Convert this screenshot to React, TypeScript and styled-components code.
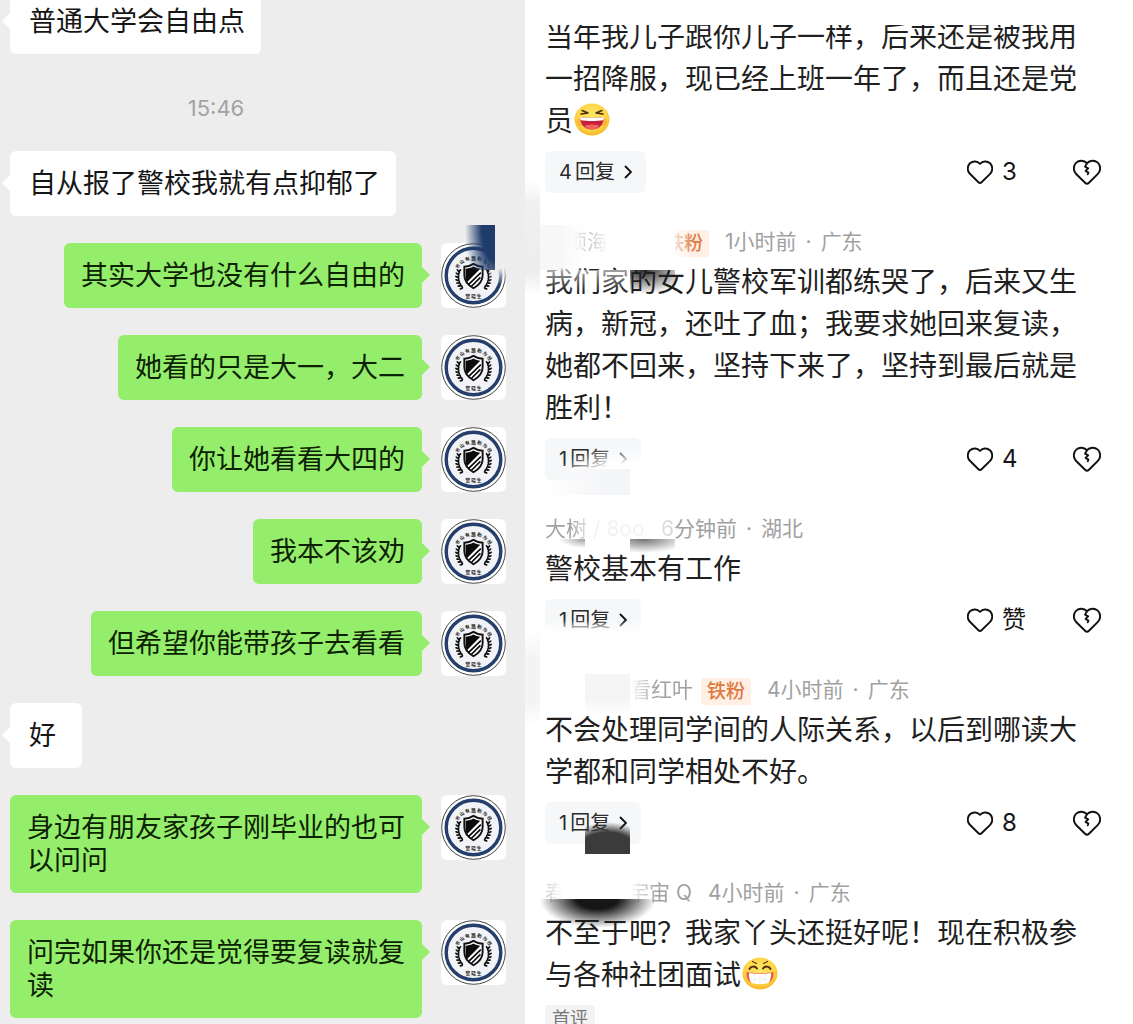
import React from "react";
import styled, { createGlobalStyle } from "styled-components";

const GlobalStyle = createGlobalStyle`
  * { box-sizing: border-box; }
  body { margin: 0; background: #fff; }
  button { font: inherit; color: inherit; border: 0; margin: 0; padding: 0; background: none; cursor: pointer; }
`;

const Page = styled.main`
  display: grid;
  grid-template-columns: 525fr 15px 593fr;
  height: 100vh;
  overflow: hidden;
  font-family: Inter, "Noto Sans CJK SC", sans-serif;
`;

/* ---------- chat ---------- */

const Chat = styled.section`
  display: flex;
  flex-direction: column;
  gap: 27px;
  margin-top: -11px;
  padding: 0 19px 0 10px;
  background: #ededed;
  font-family: "Noto Sans CJK SC", sans-serif;
`;

const Time = styled.time`
  padding: 11px 84px 0 0;
  text-align: center;
  font: 22px/32px Inter, sans-serif;
  color: #a3a3a3;
`;

const Message = styled.div<{ $mine?: boolean }>`
  display: flex;
  align-items: flex-start;
  justify-content: ${(p) => (p.$mine ? "flex-end" : "flex-start")};
  gap: 19px;
`;

const Bubble = styled.p<{ $mine?: boolean }>`
  position: relative;
  margin: 0;
  padding: ${(p) => (p.$mine ? "14px 17px 18px" : "14px 16px 18px 19px")};
  min-width: 72px;
  max-width: 412px;
  border-radius: 6px;
  font-size: 27px;
  line-height: 33px;
  color: ${(p) => (p.$mine ? "#0c2203" : "#161616")};
  background: ${(p) => (p.$mine ? "#95ee6b" : "#fff")};

  &::after {
    content: "";
    position: absolute;
    top: 23px;
    ${(p) => (p.$mine ? "right" : "left")}: -8px;
    width: 9px;
    height: 18px;
    background: inherit;
    clip-path: ${(p) =>
      p.$mine ? "polygon(0 0, 100% 50%, 0 100%)" : "polygon(100% 0, 0 50%, 100% 100%)"};
  }
`;

const AvatarFrame = styled.div`
  position: relative;
  flex: none;
  width: 65px;
  height: 65px;
  border-radius: 6px;
  background: #fff;

  svg { display: block; }
`;

const leaves = [0, 1, 2, 3, 4, 5, 6].map((i) => {
  const angle = ((160 + i * 11) * Math.PI) / 180;
  return { x: 32.5 + 15.5 * Math.cos(angle), y: 34 - 15.5 * Math.sin(angle), turn: -i * 11 };
});

function Avatar({ children }: { children?: React.ReactNode }) {
  return (
    <AvatarFrame>
      <svg width="65" height="65" viewBox="0 0 65 65" role="img" aria-label="警晓生">
        <defs>
          <path id="arc" d="M15 34 A17.500 17.500 0 0 1 50 34" />
        </defs>
        <circle cx="32.5" cy="32.5" r="31.8" fill="#fff" stroke="#444" strokeWidth="1" />
        <circle cx="32.5" cy="32.5" r="27.3" fill="#f1f3f6" stroke="#243f6c" strokeWidth="3.4" />
        <g fontSize="4.600" fontWeight="700" fill="#222" fontFamily="Noto Sans CJK SC, sans-serif">
          <text>
            <textPath href="#arc" startOffset="50%" textAnchor="middle">
              书 山 有 路 勤 为 径
            </textPath>
          </text>
          <text x="32.5" y="54.500" textAnchor="middle">警 晓 生</text>
        </g>
        {[false, true].map((flip) => (
          <g key={String(flip)} transform={flip ? "translate(65 0) scale(-1 1)" : undefined} fill="#111">
            {leaves.map((l) => (
              <g key={l.turn} transform={`translate(${l.x} ${l.y}) rotate(${l.turn})`}>
                <ellipse cx="-1.500" rx="1.900" ry="0.9" transform="rotate(50)" />
                <ellipse cx="1.500" rx="1.900" ry="0.9" transform="rotate(-50)" />
              </g>
            ))}
          </g>
        ))}
        <g transform="translate(4.200 4.800) scale(0.87)">
          <path d="M32.5 18.500c4 2.600 7.500 3.200 10.500 3.300v9.700c0 7-4.500 11.500-10.500 15-6-3.500-10.500-8-10.500-15v-9.700c3-.1 6.500-.7 10.500-3.300z" fill="#fff" stroke="#111" strokeWidth="2.200" />
          <path d="M32.500 21.500c2.800 1.600 5.300 2.200 7.800 2.500L25 39.500c-1.200-2.300-1.500-4.800-1.500-8V24c3-.3 6-.9 9-2.500z" fill="#0b0b0b" />
          <path d="M27 42 41 28.500M30 44.500l10.500-10.500" stroke="#0b0b0b" strokeWidth="1.900" fill="none" />
        </g>
      </svg>
      {children}
    </AvatarFrame>
  );
}

/* ---------- comments ---------- */

const Gutter = styled.div`
  position: relative;
`;

const Comments = styled.section`
  margin-top: 25px;
  overflow: hidden;
`;

const CommentList = styled.div`
  display: flex;
  flex-direction: column;
  gap: 32px;
  margin-top: -9px;
  padding: 0 30px 0 5px;
`;

const Comment = styled.article`
  position: relative;
  display: flex;
  flex-direction: column;
`;

const Meta = styled.header`
  display: flex;
  align-items: center;
  height: 36px;
  font-size: 21px;
  line-height: 32px;
  padding-bottom: 2px;
  color: #a1a1a1;
`;

const Name = styled.span<{ $width: number; $align?: string; $fade?: string }>`
  display: flex;
  flex: none;
  justify-content: ${(p) => p.$align ?? "flex-start"};
  width: ${(p) => p.$width}px;
  white-space: pre;
  mask-image: ${(p) => p.$fade ?? "none"};
`;

const FanBadge = styled.span`
  margin: 2px 0 0 8px;
  padding: 0 6px;
  border-radius: 3px;
  font-size: 19px;
  line-height: 27px;
  font-weight: 500;
  color: #e07a40;
  background: #ffefe5;
`;

const Posted = styled.span<{ $gap?: boolean }>`
  margin-left: ${(p) => (p.$gap ? 16 : 0)}px;
`;

const Dot = styled.span`
  margin: 0 9px;
`;

const Text = styled.p`
  margin: 0;
  font-size: 28px;
  line-height: 42px;
  color: #1f1f1f;

  svg { vertical-align: -5px; margin-left: 1px; }
`;

const Actions = styled.footer`
  display: flex;
  align-items: center;
  height: 42px;
  margin-top: 9px;
`;

const Reply = styled.button`
  display: flex;
  align-items: center;
  gap: 3px;
  height: 42px;
  padding: 0 14px;
  border-radius: 6px;
  font-size: 20px;
  line-height: 24px;
  color: #2b2b2b;
  background: #f5f7f9;

  svg { margin-left: 6px; }
`;

const Like = styled.button`
  display: flex;
  align-items: center;
  gap: 9px;
  width: 106px;
  margin-left: auto;
  font-size: 24px;
  line-height: 32px;
  color: #161616;
`;

const Dislike = styled.button`
  display: flex;
  margin-right: 2px;
`;

const FirstTag = styled.span`
  align-self: flex-start;
  margin-top: 9px;
  padding: 0 7px;
  border-radius: 3px;
  font-size: 18px;
  line-height: 27px;
  color: #777;
  background: #f3f3f3;
`;

/* Soft patch lying over a name or avatar to keep it private. */
const Smudge = styled.i<{ $x: number; $y: number; $w: number; $h: number; $bg: string }>`
  position: absolute;
  pointer-events: none;
  left: ${(p) => p.$x}px;
  top: ${(p) => p.$y}px;
  width: ${(p) => p.$w}px;
  height: ${(p) => p.$h}px;
  background: ${(p) => p.$bg};
`;

const HEART =
  "M11.200 22 2.900 13.800C-.2 10.700.3 5.700 3 3.300 6 .6 10.300 1 13 3.800 15.700 1 20 .6 23 3.300c2.700 2.400 3.200 7.400.1 10.500L14.800 22c-1 1-2.600 1-3.600 0z";

const Heart = () => (
  <svg width="26" height="24" viewBox="0 0 26 24" fill="none" stroke="#111" strokeWidth="1.900" strokeLinejoin="round" aria-hidden="true">
    <path d={HEART} />
  </svg>
);

const BrokenHeart = () => (
  <svg width="28" height="26" viewBox="0 0 26 24" fill="none" stroke="#111" strokeWidth="1.800" strokeLinejoin="round" strokeLinecap="round" aria-hidden="true">
    <path d={HEART} />
    <path d="M13 3.800 11.200 7l2.900 1.600-2.400 2.400 2.600 1.500-.6 1.600" />
  </svg>
);

const Chevron = () => (
  <svg width="8" height="14" viewBox="0 0 8 14" fill="none" stroke="#111" strokeWidth="1.900" aria-hidden="true">
    <path d="M1 1l6 6-6 6" />
  </svg>
);

const Face = () => (
  <>
    <radialGradient id="face" cx="50%" cy="40%" r="60%">
      <stop offset="0" stopColor="#ffe768" />
      <stop offset="0.700" stopColor="#fed545" />
      <stop offset="1" stopColor="#f7b52c" />
    </radialGradient>
    <ellipse cx="18" cy="16.500" rx="17.500" ry="16" fill="url(#face)" />
  </>
);

const Laugh = () => (
  <svg width="36" height="33" viewBox="0 0 36 33" role="img" aria-label="大笑">
    <Face />
    <circle cx="7" cy="19" r="4" fill="#f99a3c" opacity="0.5" />
    <circle cx="29" cy="19" r="4" fill="#f99a3c" opacity="0.5" />
    <path d="M8 7.500l6 2.500-7 1M28 7.500l-6 2.500 7 1" fill="none" stroke="#4a2c0c" strokeWidth="1.500" strokeLinejoin="round" strokeLinecap="round" />
    <path d="M6 14c7 1.200 17 1.200 24 0-.3 8-5 12.500-12 12.500S6.300 22 6 14z" fill="#c3203a" />
    <path d="M6 14c7 1.200 17 1.200 24 0l-.5 3.200c-7 1-16 1-23 0z" fill="#fff" />
    <path d="M10.500 23c4-2 11-2 15 0-1.800 2.400-4.500 3.500-7.500 3.500s-5.700-1.100-7.500-3.500z" fill="#f0645f" />
  </svg>
);

const Grin = () => (
  <svg width="36" height="33" viewBox="0 0 36 33" role="img" aria-label="呲牙">
    <Face />
    <path d="M10.500 4.500l4 2M25.500 4.500l-4 2" stroke="#5a3a10" strokeWidth="1.300" strokeLinecap="round" />
    <path d="M7.500 12c1.300-3 5.500-3.300 7.500-.5M21 11.500c2-2.800 6.200-2.500 7.500.5" fill="none" stroke="#4a2c0c" strokeWidth="1.900" strokeLinecap="round" />
    <path d="M4.500 15c8 1.500 19 1.500 27 0 .3 6-1.500 8.500-4 10h-19c-2.500-1.500-4.300-4-4-10z" fill="#ec5a3f" />
    <path d="M7 16c6.500 1 15.500 1 22 0 .2 6-1.500 10-4.500 10.500-4 .7-9 .7-13 0C8.500 26 6.800 22 7 16z" fill="#fff" />
    <path d="M8 22h20M13 17v9.500M18 17.500v9.500M23 17v9.500" stroke="#e3e6ea" strokeWidth="0.600" />
  </svg>
);

function ActionRow({ replies, likes }: { replies: number; likes: string }) {
  return (
    <Actions>
      <Reply type="button">
        <span>{replies}</span>
        <span>回复</span>
        <Chevron />
      </Reply>
      <Like type="button" aria-label={`赞 ${likes}`}>
        <Heart />
        <span>{likes}</span>
      </Like>
      <Dislike type="button" aria-label="踩">
        <BrokenHeart />
      </Dislike>
    </Actions>
  );
}

const PostedAt = ({ time, place, gap = true }: { time: string; place: string; gap?: boolean }) => (
  <Posted $gap={gap}>
    {time}
    <Dot>·</Dot>
    {place}
  </Posted>
);

const replies = [
  "她看的只是大一，大二",
  "你让她看看大四的",
  "我本不该劝",
  "但希望你能带孩子去看看",
];

const closing = ["身边有朋友家孩子刚毕业的也可以问问", "问完如果你还是觉得要复读就复读"];

const Mine = ({ text, cover }: { text: string; cover?: React.ReactNode }) => (
  <Message $mine>
    <Bubble $mine>{text}</Bubble>
    <Avatar>{cover}</Avatar>
  </Message>
);

const Theirs = ({ text }: { text: string }) => (
  <Message>
    <Bubble>{text}</Bubble>
  </Message>
);

export default function App() {
  return (
    <Page>
      <GlobalStyle />
      <Chat>
        <Theirs text="普通大学会自由点" />
        <Time>15:46</Time>
        <Theirs text="自从报了警校我就有点抑郁了" />
        <Mine
          text="其实大学也没有什么自由的"
          cover={
            <>
              <Smudge $x={48} $y={0} $w={17} $h={42} $bg="radial-gradient(ellipse 24px 42px at 60% 0, #ededed 60%, rgba(237,237,237,0) 100%)" />
              <Smudge $x={24} $y={-18} $w={30} $h={45} $bg="radial-gradient(ellipse 30px 80px at 100% 0, #1f3c6b 45%, rgba(31,60,107,0) 100%)" />
            </>
          }
        />
        {replies.map((t) => (
          <Mine key={t} text={t} />
        ))}
        <Theirs text="好" />
        {closing.map((t) => (
          <Mine key={t} text={t} />
        ))}
      </Chat>

      <Gutter>
        <Smudge $x={0} $y={180} $w={15} $h={115} $bg="linear-gradient(rgba(237,237,237,0), #f0f0f0 20%, #ededed 80%, rgba(237,237,237,0))" />
        <Smudge $x={0} $y={630} $w={15} $h={95} $bg="linear-gradient(rgba(243,243,243,0), #f4f4f4 30%, #f4f4f4 75%, rgba(243,243,243,0))" />
      </Gutter>

      <Comments>
        <CommentList>
          <Comment>
            <Text>
              当年我儿子跟你儿子一样，后来还是被我用一招降服，现已经上班一年了，而且还是党员
              <Laugh />
            </Text>
            <ActionRow replies={4} likes="3" />
          </Comment>

          <Comment>
            <Meta>
              <Name $width={106} $fade="linear-gradient(90deg, transparent 25%, #0009 42%, transparent 60%)">
                {"\u3000"}顷海
              </Name>
              <FanBadge>铁粉</FanBadge>
              <PostedAt time="1小时前" place="广东" />
            </Meta>
            <Text>我们家的女儿警校军训都练哭了，后来又生病，新冠，还吐了血；我要求她回来复读，她都不回来，坚持下来了，坚持到最后就是胜利！</Text>
            <ActionRow replies={1} likes="4" />
            <Smudge $x={-5} $y={0} $w={45} $h={45} $bg="linear-gradient(90deg, #f7f7f8 40%, rgba(250,250,251,0))" />
            <Smudge $x={85} $y={0} $w={45} $h={45} $bg="#fff" />
            <Smudge $x={130} $y={0} $w={18} $h={45} $bg="linear-gradient(90deg, rgba(255,255,255,.8), rgba(255,255,255,0))" />
            <Smudge $x={-5} $y={45} $w={90} $h={22} $bg="linear-gradient(rgba(255,255,255,.6), rgba(255,255,255,0))" />
            <Smudge $x={85} $y={45} $w={45} $h={24} $bg="radial-gradient(ellipse 46px 24px at 30% 0, rgba(30,30,30,.95), rgba(40,40,40,0))" />
            <Smudge $x={15} $y={224} $w={90} $h={46} $bg="radial-gradient(ellipse at 75% 75%, #fff 40%, rgba(255,255,255,0) 80%)" />
            <Smudge $x={3} $y={244} $w={82} $h={26} $bg="linear-gradient(100deg, rgba(244,245,247,0), #f4f5f7 70%)" />
          </Comment>

          <Comment>
            <Meta>
              <Name $width={129} $align="space-between" $fade="linear-gradient(90deg, #000 20%, #0002 36%, #0002 80%, #0007)">
                <span>大树 / 8oo</span>
                <span>6</span>
              </Name>
              <PostedAt gap={false} time="分钟前" place="湖北" />
            </Meta>
            <Text>警校基本有工作</Text>
            <ActionRow replies={1} likes="赞" />
            <Smudge $x={10} $y={27} $w={30} $h={9} $bg="radial-gradient(ellipse 26px 9px at 100% 0, rgba(90,90,90,.6), rgba(90,90,90,0))" />
            <Smudge $x={85} $y={27} $w={45} $h={14} $bg="radial-gradient(ellipse 46px 14px at 30% 0, rgba(90,90,90,.85), rgba(90,90,90,0))" />
            <Smudge $x={-5} $y={108} $w={110} $h={24} $bg="linear-gradient(rgba(255,255,255,0), #fff 50%)" />
          </Comment>

          <Comment>
            <Meta>
              <Name $width={148} $align="flex-end" $fade="linear-gradient(90deg, transparent 58%, #000 75%)">
                看红叶
              </Name>
              <FanBadge>铁粉</FanBadge>
              <PostedAt time="4小时前" place="广东" />
            </Meta>
            <Text>不会处理同学间的人际关系，以后到哪读大学都和同学相处不好。</Text>
            <ActionRow replies={1} likes="8" />
            <Smudge $x={40} $y={1} $w={45} $h={42} $bg="linear-gradient(#f5f5f5 60%, rgba(245,245,245,0))" />
            <Smudge $x={40} $y={140} $w={45} $h={41} $bg="radial-gradient(ellipse 46px 32px at 50% 100%, #3b3b3b 68%, rgba(59,59,59,0) 100%)" />
          </Comment>

          <Comment>
            <Meta>
              <Name $width={147} $align="space-between" $fade="linear-gradient(90deg, #0008, transparent 12%, transparent 58%, #000 76%)">
                <span>春</span>
                <span>宇宙 Q</span>
              </Name>
              <PostedAt time="4小时前" place="广东" />
            </Meta>
            <Text>
              不至于吧？我家丫头还挺好呢！现在积极参与各种社团面试
              <Grin />
            </Text>
            <FirstTag>首评</FirstTag>
            <Smudge $x={-5} $y={23} $w={115} $h={32} $bg="radial-gradient(ellipse 58px 29px at 50% 0, #161616 35%, rgba(22,22,22,0) 100%)" />
          </Comment>
        </CommentList>
      </Comments>
    </Page>
  );
}
